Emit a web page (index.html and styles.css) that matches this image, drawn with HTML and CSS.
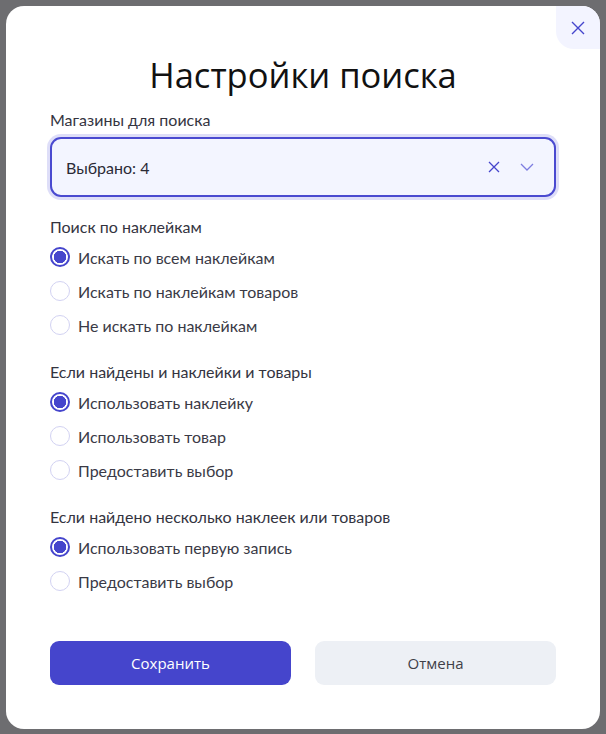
FILE: index.html
```html
<!DOCTYPE html>
<html lang="ru">
<head>
<meta charset="utf-8">
<title>Настройки поиска</title>
<link rel="stylesheet" href="styles.css">
</head>
<body>
<div class="backdrop">
  <div class="modal">
    <button class="close" type="button" aria-label="Закрыть">
      <svg width="14" height="14" viewBox="0 0 14 14"><path d="M1 1L13 13M13 1L1 13" stroke="#4545cc" stroke-width="1.4" fill="none"/></svg>
    </button>
    <h1 class="title">Настройки поиска</h1>

    <div class="field">
      <div class="label">Магазины для поиска</div>
      <div class="select">
        <span class="select-value">Выбрано: 4</span>
        <span class="select-icons">
          <svg width="12" height="12" viewBox="0 0 12 12"><path d="M1 1L11 11M11 1L1 11" stroke="#4545cc" stroke-width="1.3" fill="none"/></svg>
          <svg width="14" height="8" viewBox="0 0 14 8"><path d="M1 1L7 7L13 1" stroke="#7d7de0" stroke-width="1.3" fill="none"/></svg>
        </span>
      </div>
    </div>

    <div class="group">
      <div class="label">Поиск по наклейкам</div>
      <div class="options">
        <div class="option"><span class="radio checked"></span>Искать по всем наклейкам</div>
        <div class="option"><span class="radio"></span>Искать по наклейкам товаров</div>
        <div class="option"><span class="radio"></span>Не искать по наклейкам</div>
      </div>
    </div>

    <div class="group">
      <div class="label">Если найдены и наклейки и товары</div>
      <div class="options">
        <div class="option"><span class="radio checked"></span>Использовать наклейку</div>
        <div class="option"><span class="radio"></span>Использовать товар</div>
        <div class="option"><span class="radio"></span>Предоставить выбор</div>
      </div>
    </div>

    <div class="group">
      <div class="label">Если найдено несколько наклеек или товаров</div>
      <div class="options">
        <div class="option"><span class="radio checked"></span>Использовать первую запись</div>
        <div class="option"><span class="radio"></span>Предоставить выбор</div>
      </div>
    </div>

    <div class="actions">
      <button class="btn btn-primary" type="button">Сохранить</button>
      <button class="btn btn-secondary" type="button">Отмена</button>
    </div>
  </div>
</div>
</body>
</html>
```

FILE: styles.css
```css
* { box-sizing: border-box; }
html, body { margin: 0; padding: 0; }
body {
  width: 606px;
  height: 734px;
  overflow: hidden;
  background: #6d6d70;
  font-family: "Lato", "Noto Sans", sans-serif;
}
.backdrop {
  padding: 6px 6px 5px 6px;
}
.modal {
  position: relative;
  background: #ffffff;
  border-radius: 18px;
  height: 723px;
  padding: 47px 44px 44px 44px;
  display: flex;
  flex-direction: column;
}
.close {
  position: absolute;
  top: 0;
  right: 0;
  width: 44px;
  height: 43px;
  border: none;
  background: #f3f4ff;
  border-radius: 0 18px 0 18px;
  display: flex;
  align-items: center;
  justify-content: center;
  padding: 0;
  cursor: pointer;
}
.title {
  margin: 0;
  text-align: center;
  font-family: "Open Sans", sans-serif;
  font-weight: 400;
  font-size: 34.5px;
  line-height: 44px;
  color: #111111;
}
.field { margin-top: 13px; }
.label {
  font-size: 16px;
  line-height: 20px;
  color: #34343f;
}
.select {
  margin-top: 7px;
  height: 60px;
  border: 2px solid #4a4ad0;
  border-radius: 11px;
  background: #f3f5ff;
  box-shadow: 0 0 0 3px rgba(90, 90, 220, 0.2);
  display: flex;
  align-items: center;
  justify-content: space-between;
  padding: 0 20px 0 14px;
}
.select-value {
  font-size: 16px;
  color: #2a2a36;
}
.select-icons {
  display: flex;
  align-items: center;
  gap: 20px;
}
.group { margin-top: 20px; }
.options { margin-top: 3px; display: flex; flex-direction: column; }
.option {
  height: 34px;
  display: flex;
  align-items: center;
  font-size: 16px;
  color: #3a3a46;
}
.radio {
  width: 20px;
  height: 20px;
  border-radius: 50%;
  border: 1px solid #d2d2f2;
  margin-right: 8px;
  flex: none;
  background: #ffffff;
}
.radio.checked {
  border: 2px solid #4545cc;
  background: radial-gradient(circle, #4545cc 0 6px, #ffffff 6.5px);
}
.actions {
  margin-top: auto;
  display: grid;
  grid-template-columns: 1fr 1fr;
  gap: 24px;
}
.btn {
  height: 44px;
  border: none;
  border-radius: 9px;
  font-family: "Open Sans", sans-serif;
  font-size: 15px;
  cursor: pointer;
}
.btn-primary { background: #4545cc; color: #ffffff; }
.btn-secondary { background: #edf0f5; color: #3f3f48; }
```
